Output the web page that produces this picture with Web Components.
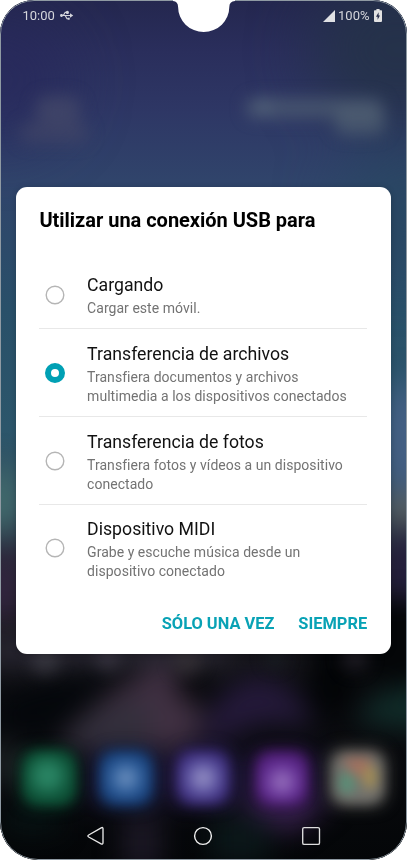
<!DOCTYPE html>
<html lang="es">
<head>
<meta charset="utf-8">
<title>Conexión USB</title>
<style>
html,body{margin:0;background:#fff;overflow:hidden}
body{font-family:Roboto,"Liberation Sans",sans-serif}
</style>
</head>
<body>
<phone-screen>
  <status-bar slot="status" time="10:00" battery="100%"></status-bar>
  <usb-dialog>
    <span slot="title">Utilizar una conexión USB para</span>
    <usb-option><span slot="label">Cargando</span>Cargar este móvil.</usb-option>
    <usb-option checked><span slot="label">Transferencia de archivos</span>Transfiera documentos y archivos<br>multimedia a los dispositivos conectados</usb-option>
    <usb-option><span slot="label">Transferencia de fotos</span>Transfiera fotos y vídeos a un dispositivo<br>conectado</usb-option>
    <usb-option><span slot="label">Dispositivo MIDI</span>Grabe y escuche música desde un<br>dispositivo conectado</usb-option>
    <dialog-action slot="actions">SÓLO UNA VEZ</dialog-action>
    <dialog-action slot="actions">SIEMPRE</dialog-action>
  </usb-dialog>
  <nav-bar slot="nav"></nav-bar>
</phone-screen>
<script>
function define(name, html) {
  const t = document.createElement('template');
  t.innerHTML = html;
  customElements.define(name, class extends HTMLElement {
    constructor() {
      super();
      this.attachShadow({mode: 'open'}).appendChild(t.content.cloneNode(true));
    }
    connectedCallback() {
      this.shadowRoot.querySelectorAll('[data-attr]').forEach(e => {
        e.textContent = this.getAttribute(e.dataset.attr);
      });
    }
  });
}

define('blurred-wallpaper', `
<style>:host{display:block}svg{display:block;width:100%;height:100%}filter{color-interpolation-filters:sRGB}</style>
<svg viewBox="0 0 407 860" preserveAspectRatio="none">
  <defs>
    <linearGradient id="sky" x1="0" y1="0" x2="0" y2="1">
      <stop offset="0" stop-color="#24274f"/><stop offset=".06" stop-color="#2a2e5c"/>
      <stop offset=".13" stop-color="#2e3765"/><stop offset=".21" stop-color="#30446b"/>
      <stop offset=".36" stop-color="#295069"/><stop offset=".5" stop-color="#2c566b"/>
      <stop offset=".59" stop-color="#344c5c"/><stop offset=".65" stop-color="#2a2a3a"/>
      <stop offset=".72" stop-color="#1d1b22"/><stop offset=".775" stop-color="#131318"/>
      <stop offset=".81" stop-color="#0b0c10"/><stop offset="1" stop-color="#040608"/>
    </linearGradient>
    <radialGradient id="green" cx=".47" cy=".45"><stop offset="0" stop-color="#2e8b6a"/><stop offset=".5" stop-color="#237a5a"/><stop offset="1" stop-color="#0f5239"/></radialGradient>
    <radialGradient id="blue"><stop offset="0" stop-color="#7c98c4"/><stop offset=".45" stop-color="#4270a8"/><stop offset="1" stop-color="#1c4784"/></radialGradient>
    <radialGradient id="violet"><stop offset="0" stop-color="#a09cca"/><stop offset=".5" stop-color="#6d66ad"/><stop offset="1" stop-color="#433686"/></radialGradient>
    <radialGradient id="purple" cy=".56"><stop offset="0" stop-color="#9e7cc0"/><stop offset=".5" stop-color="#7747a6"/><stop offset="1" stop-color="#572485"/></radialGradient>
    <filter id="b5" x="-50%" y="-50%" width="200%" height="200%"><feGaussianBlur stdDeviation="6"/></filter>
    <filter id="b8" x="-50%" y="-80%" width="200%" height="260%"><feGaussianBlur stdDeviation="8"/></filter>
    <filter id="b11" x="-50%" y="-80%" width="200%" height="260%"><feGaussianBlur stdDeviation="13"/></filter>
    <filter id="b16" x="-80%" y="-80%" width="260%" height="260%"><feGaussianBlur stdDeviation="15"/></filter>
    <filter id="b30" x="-80%" y="-80%" width="260%" height="260%"><feGaussianBlur stdDeviation="30"/></filter>
  </defs>
  <rect width="407" height="860" fill="url(#sky)"/>
  <!-- sky tints -->
  <g filter="url(#b30)">
    <ellipse cx="400" cy="50" rx="90" ry="75" fill="#253348" opacity=".85"/>
    <ellipse cx="410" cy="210" rx="75" ry="60" fill="#27475f" opacity=".7"/>
    <ellipse cx="0" cy="80" rx="70" ry="65" fill="#27265a" opacity=".6"/>
  </g>
  <!-- clock and weather widgets -->
  <g filter="url(#b8)">
    <rect x="36" y="96" width="44" height="28" rx="10" fill="#464a6a" opacity=".7"/>
    <rect x="20" y="123" width="68" height="20" rx="8" fill="#454867" opacity=".6"/>
    <rect x="246" y="98" width="137" height="20" rx="9" fill="#505f74" opacity=".7"/>
    <rect x="335" y="107" width="50" height="28" rx="9" fill="#536374" opacity=".68"/>
    <circle cx="263" cy="107" r="9" fill="#5a6a80" opacity=".6"/>
  </g>
  <!-- side glows -->
  <g filter="url(#b16)">
    <ellipse cx="406" cy="440" rx="24" ry="60" fill="#466086"/>
    <ellipse cx="407" cy="509" rx="20" ry="13" fill="#6b665d"/>
    <ellipse cx="408" cy="578" rx="22" ry="48" fill="#231d3c"/>
    <ellipse cx="0" cy="500" rx="18" ry="34" fill="#44706f"/>
    <ellipse cx="0" cy="590" rx="18" ry="34" fill="#352542"/>
  </g>
  <!-- lower landscape -->
  <g filter="url(#b11)">
    <rect x="-20" y="636" width="250" height="28" fill="#282631"/>
    <rect x="310" y="600" width="130" height="85" fill="#040608"/>
    <path d="M58 741Q108 690 145 674Q172 645 198 706Q214 752 155 749Z" fill="#403042"/>
    <path d="M75 724Q110 700 150 700V749H62Z" fill="#332f3c"/>
    <ellipse cx="192" cy="688" rx="16" ry="12" fill="#06060a"/>
    <path d="M199 742Q215 680 262 676Q307 688 311 728Q260 714 223 742Z" fill="#241939"/>
    <path d="M0 700Q60 680 137 664Q90 690 55 732L0 735Z" fill="#04070b"/>
    <ellipse cx="331" cy="688" rx="22" ry="30" fill="#020406"/>
    <path d="M355 722L377 694L430 680V732Z" fill="#102b28"/>
    <ellipse cx="5" cy="765" rx="18" ry="24" fill="#1c2224"/>
    <rect x="5" y="810" width="55" height="22" fill="#071414"/>
    <rect x="122" y="815" width="40" height="55" fill="#1b1724"/>
    <rect x="210" y="817" width="60" height="45" fill="#0b1719"/>
    <rect x="85" y="752" width="240" height="54" fill="#17122b"/>
    <path d="M230 800H335L290 836Z" fill="#341f48"/>
  </g>
  <g filter="url(#b8)" opacity=".65">
    <circle cx="45" cy="660" r="14" fill="#41414a"/><circle cx="108" cy="658" r="13" fill="#403b48"/>
    <circle cx="187" cy="660" r="15" fill="#3a3539"/><circle cx="275" cy="658" r="10" fill="#1b2227"/>
    <circle cx="355" cy="658" r="14" fill="#28242e"/>
  </g>
  <!-- dock -->
  <g filter="url(#b8)">
    <rect x="22" y="750" width="54" height="56" rx="14" fill="#0d5236"/>
    <rect x="99" y="750" width="54" height="56" rx="14" fill="#173c70"/>
    <rect x="176" y="749" width="54" height="56" rx="14" fill="#37286e"/>
    <rect x="255" y="750" width="54" height="57" rx="14" fill="#481b68"/>
    <rect x="329" y="749" width="57" height="57" rx="14" fill="#5b5a57"/>
  </g>
  <g filter="url(#b5)">
    <rect x="26" y="755" width="46" height="46" rx="14" fill="url(#green)"/>
    <rect x="103" y="755" width="46" height="46" rx="14" fill="url(#blue)"/>
    <rect x="180" y="755" width="46" height="46" rx="14" fill="url(#violet)"/>
    <rect x="259" y="756" width="46" height="46" rx="14" fill="url(#purple)"/>
    <rect x="335" y="755" width="46" height="46" rx="12" fill="#74736e"/>
    <path d="M342 758H373L357 780Z" fill="#a3705f"/>
    <ellipse cx="370" cy="777" rx="7" ry="12" fill="#a48e55"/>
    <ellipse cx="347" cy="783" rx="8" ry="11" fill="#579077"/>
  </g>
</svg>`);

define('phone-screen', `
<style>
:host{display:grid;width:407px;height:860px;overflow:hidden;clip-path:inset(0 round 34px 34px 38px 38px);background:#0a0c10}
blurred-wallpaper{grid-area:1/1;width:407px;height:860px}
.frame{grid-area:1/1;display:grid;grid-template-rows:30px 1fr 49px;height:860px;z-index:1}
.body{padding:157.3px 16.4px 0 15.9px}
.notch{position:absolute;left:173px;top:0;z-index:2;display:block}
.edge{position:absolute;inset:0;width:407px;height:860px;box-sizing:border-box;border:1px solid #8f9aa3;border-radius:34px 34px 38px 38px;z-index:1}
</style>
<blurred-wallpaper></blurred-wallpaper>
<div class="frame"><slot name="status"></slot><div class="body"><slot></slot></div><slot name="nav"></slot></div>
<div class="edge"></div>
<svg class="notch" width="62" height="33" viewBox="0 0 62 33"><path d="M0 0H62V1Q56.3 1.5 56.3 7A25.6 25 0 0 1 5.1 7Q5 1.5 0 1Z" fill="#fff"/></svg>`);

define('status-bar', `
<style>
:host{display:flex;align-items:center;justify-content:space-between;padding:2px 25px 0 22.4px;color:#d5d6dc;font-size:13px;height:30px;box-sizing:border-box;line-height:16px}
div{display:flex;align-items:center}svg{display:block}
.usb{margin-left:5px}.sig{margin-right:3.5px}.bat{margin:-1px 0 0 4.5px}
</style>
<div><span data-attr="time"></span>
<svg class="usb" width="14" height="12" viewBox="0 0 14 12" fill="none" stroke="#d5d6dc" stroke-width="1.1"><path d="M1 5.5H11M3.2 5.5L5.2 2.4H7M5.2 5.5L7 8.7H8.6"/><circle cx="1.5" cy="5.5" r=".9" fill="#d5d6dc"/><path d="M10 3.3L13.2 5.5L10 7.7Z" fill="#d5d6dc" stroke="none"/><circle cx="7.4" cy="2.4" r="1" fill="#d5d6dc"/><rect x="7.7" y="7.7" width="2" height="2" fill="#d5d6dc" stroke="none"/></svg></div>
<div><svg class="sig" width="12" height="12" viewBox="0 0 12 12"><path d="M0 12L12 0V12Z" fill="#dfe0e3"/></svg><span data-attr="battery"></span>
<svg class="bat" width="8" height="13" viewBox="0 0 8 13"><path d="M2.4 0H5.6V1.3H7.3Q8 1.3 8 2V12Q8 13 7 13H1Q0 13 0 12V2Q0 1.3.7 1.3H2.4Z" fill="#e2e2e2"/><path d="M4.6 3.3L2 7.7H3.6V10.8L6 6.4H4.6Z" fill="#252b48"/></svg></div>`);

define('usb-dialog', `
<style>
:host{display:flex;flex-direction:column;height:467.2px;box-sizing:border-box;border-radius:11px;background:#fff;padding:0 23.5px;box-shadow:0 1px 6px #0003}
h1{margin:0;padding-top:20.7px;height:52.6px;font-size:20px;font-weight:700;line-height:24px;color:#000;white-space:nowrap;letter-spacing:-.02px}
.actions{display:flex;justify-content:flex-end;gap:24px;padding-top:21.2px}
</style>
<h1><slot name="title"></slot></h1><div><slot></slot></div><div class="actions"><slot name="actions"></slot></div>`);

define('usb-option', `
<style>
:host{display:flex;align-items:center;border-bottom:1px solid #e8e8e8;padding:13.4px 0 10.5px 6px;white-space:nowrap}
:host(:last-of-type){border-color:transparent}
svg{display:block;width:20px;height:20px;flex:none;margin:-2.6px 21.7px 0 0}
.on{display:none}:host([checked]) .on{display:block}:host([checked]) .off{display:none}
.label{font-size:17.7px;line-height:22px;color:#111}
.desc{font-size:14px;line-height:18.8px;color:#737373;margin-top:3.2px;letter-spacing:.04px}
</style>
<svg viewBox="0 0 20 20" fill="none"><circle class="off" cx="10" cy="10" r="8.8" stroke="#b5b5b5" stroke-width="1.4"/><circle class="on" cx="10" cy="10" r="7" stroke="#00a0b4" stroke-width="6"/></svg><div><div class="label"><slot name="label"></slot></div><div class="desc"><slot></slot></div></div>`);

define('dialog-action', `
<style>:host{display:block;font-size:16.4px;font-weight:700;line-height:20px;color:#08a2b5;white-space:nowrap}</style><slot></slot>`);

define('nav-bar', `
<style>:host{display:flex;justify-content:space-between;align-items:flex-start;padding:14.8px 86px 0 86.7px;height:49px;box-sizing:border-box}svg{display:block}</style>
<svg width="18" height="20" viewBox="0 0 18 20" fill="none" stroke="#e8e8e8" stroke-width="1.35"><path d="M14.2 1.8Q16 .8 16 2.8V16.6Q16 18.8 14.1 17.8L1.7 11Q.1 10 1.7 9Z"/></svg>
<svg width="20" height="20" viewBox="0 0 20 20" fill="none" stroke="#f0f0f0" stroke-width="1.4"><circle cx="10" cy="10" r="8.4"/></svg>
<svg width="20" height="20" viewBox="0 0 20 20" fill="none" stroke="#dedede" stroke-width="1.35"><rect x="1.7" y="1.6" width="16.8" height="16.8" rx="1.5"/></svg>`);
</script>
</body>
</html>
